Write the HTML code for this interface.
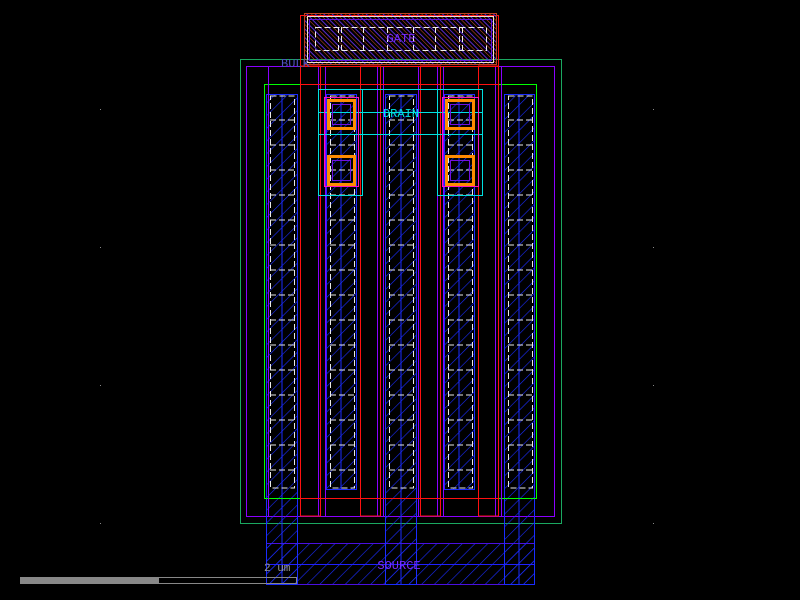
<!DOCTYPE html>
<html><head><style>html,body{margin:0;padding:0;background:#000;}svg{display:block}</style></head>
<body>
<svg width="800" height="600" viewBox="0 0 800 600" xmlns="http://www.w3.org/2000/svg" font-family="Liberation Mono, monospace">
<defs>
<pattern id="hb" width="9" height="9" patternUnits="userSpaceOnUse" patternTransform="rotate(45)">
<line x1="0" y1="0" x2="0" y2="9" stroke="#1a2cff" stroke-width="1.2"/></pattern>
<pattern id="hg" width="6" height="6" patternUnits="userSpaceOnUse" patternTransform="rotate(-45)">
<line x1="0" y1="0" x2="0" y2="6" stroke="#e0502a" stroke-width="1"/>
<line x1="3" y1="0" x2="3" y2="6" stroke="#5a2ad0" stroke-width="1"/></pattern>
</defs>
<rect width="800" height="600" fill="#000"/>
<g fill="#888"><rect x="100" y="109" width="1" height="1"/><rect x="100" y="247" width="1" height="1"/><rect x="100" y="385" width="1" height="1"/><rect x="100" y="523" width="1" height="1"/><rect x="653" y="109" width="1" height="1"/><rect x="653" y="247" width="1" height="1"/><rect x="653" y="385" width="1" height="1"/><rect x="653" y="523" width="1" height="1"/></g>
<g fill="none">
<rect x="240.5" y="59.5" width="321" height="464" stroke="#1aa860"/>
<rect x="246.5" y="66.5" width="308" height="450" stroke="#8a00ff"/>
<!-- source -->
<rect x="266.5" y="543.5" width="268" height="41" fill="url(#hb)" stroke="#4a10e0"/>
<line x1="266" y1="564.5" x2="534" y2="564.5" stroke="#2020ff"/>
<!-- diffusion columns -->
<g stroke="#1a2cff">
<rect x="266.5" y="94.5" width="31" height="490" fill="url(#hb)"/>
<rect x="385.5" y="94.5" width="31" height="490" fill="url(#hb)"/>
<rect x="504.5" y="94.5" width="30" height="490" fill="url(#hb)"/>
<rect x="326.5" y="94.5" width="30" height="395" fill="url(#hb)"/>
<rect x="444.5" y="94.5" width="30" height="395" fill="url(#hb)"/>
<line x1="282" y1="94" x2="282" y2="584"/><line x1="341" y1="94" x2="341" y2="489"/><line x1="401" y1="94" x2="401" y2="584"/><line x1="459" y1="94" x2="459" y2="489"/><line x1="519" y1="94" x2="519" y2="584"/>
</g>
<rect x="264.5" y="84.5" width="272" height="414" stroke="#00ff00"/>
<!-- contacts -->
<g stroke="#e8e8e8" stroke-dasharray="6,3">
<rect x="270.5" y="96" width="24" height="392"/>
<rect x="330.5" y="96" width="24" height="392"/>
<rect x="389.5" y="96" width="24" height="392"/>
<rect x="448.5" y="96" width="24" height="392"/>
<rect x="508.5" y="96" width="24" height="392"/>
</g>
<g stroke="#e8e8e8" stroke-dasharray="6,3" id="hl">
<path d="M270 120H295M270 145H295M270 170H295M270 195H295M270 220H295M270 245H295M270 270H295M270 295H295M270 320H295M270 345H295M270 370H295M270 395H295M270 420H295M270 445H295M270 470H295"/>
<path transform="translate(60,0)" d="M270 120H295M270 145H295M270 170H295M270 195H295M270 220H295M270 245H295M270 270H295M270 295H295M270 320H295M270 345H295M270 370H295M270 395H295M270 420H295M270 445H295M270 470H295"/>
<path transform="translate(119,0)" d="M270 120H295M270 145H295M270 170H295M270 195H295M270 220H295M270 245H295M270 270H295M270 295H295M270 320H295M270 345H295M270 370H295M270 395H295M270 420H295M270 445H295M270 470H295"/>
<path transform="translate(178,0)" d="M270 120H295M270 145H295M270 170H295M270 195H295M270 220H295M270 245H295M270 270H295M270 295H295M270 320H295M270 345H295M270 370H295M270 395H295M270 420H295M270 445H295M270 470H295"/>
<path transform="translate(238,0)" d="M270 120H295M270 145H295M270 170H295M270 195H295M270 220H295M270 245H295M270 270H295M270 295H295M270 320H295M270 345H295M270 370H295M270 395H295M270 420H295M270 445H295M270 470H295"/>
</g>
<!-- purple finger lines -->
<g stroke="#8a00ff">
<line x1="268.5" y1="66" x2="268.5" y2="516"/><line x1="318.5" y1="66" x2="318.5" y2="516"/><line x1="325.5" y1="66" x2="325.5" y2="516"/>
<line x1="377.5" y1="66" x2="377.5" y2="516"/><line x1="383.5" y1="66" x2="383.5" y2="516"/><line x1="418.5" y1="66" x2="418.5" y2="516"/>
<line x1="437.5" y1="66" x2="437.5" y2="516"/><line x1="443.5" y1="66" x2="443.5" y2="516"/><line x1="495.5" y1="66" x2="495.5" y2="516"/><line x1="501.5" y1="66" x2="501.5" y2="516"/>
</g>
<!-- red gates -->
<g stroke="#ff1010">
<rect x="300.5" y="15.5" width="198" height="51"/>
<rect x="300.5" y="66" width="20" height="450"/>
<rect x="360.5" y="66" width="20" height="450"/>
<rect x="420.5" y="66" width="20" height="450"/>
<rect x="478.5" y="66" width="20" height="450"/>
<line x1="300" y1="84.5" x2="498" y2="84.5"/>
<line x1="300" y1="498.5" x2="498" y2="498.5"/>
</g>
<!-- gate pad -->
<rect x="304.5" y="13.5" width="192" height="51" fill="url(#hg)" stroke="#c04020"/>
<rect x="307.5" y="16.5" width="186" height="46" stroke="#f0e0d0"/>
<rect x="309.5" y="19.5" width="182" height="41" stroke="#6010e0"/>
<g stroke="#eee" stroke-dasharray="6,3">
<rect x="315.5" y="27.5" width="171" height="23"/>
<path d="M338.5 27V50M341.5 27V50M363.5 27V50M387.5 27V50M413.5 27V50M435.5 27V50M459.5 27V50M462.5 27V50"/>
</g>
<!-- cyan drain -->
<g stroke="#00e0e0">
<rect x="318.5" y="89.5" width="44" height="106"/>
<rect x="437.5" y="89.5" width="45" height="106"/>
<line x1="318" y1="89.5" x2="482" y2="89.5"/>
<line x1="318" y1="112.5" x2="482" y2="112.5"/>
<line x1="318" y1="134.5" x2="482" y2="134.5"/>
</g>
<g stroke="#ff10c0"><rect x="324.5" y="97.5" width="34" height="89"/><rect x="442.5" y="97.5" width="36" height="89"/></g>
<g stroke="#ff8c00" stroke-width="3">
<rect x="328.5" y="100.5" width="26" height="28"/><rect x="328.5" y="156.5" width="26" height="28"/>
<rect x="446.5" y="100.5" width="27" height="28"/><rect x="446.5" y="156.5" width="27" height="28"/>
</g>
<g stroke="#7010e0"><rect x="332.5" y="104.5" width="18" height="20"/><rect x="332.5" y="160.5" width="18" height="20"/><rect x="450.5" y="104.5" width="19" height="20"/><rect x="450.5" y="160.5" width="19" height="20"/></g>
</g>
<!-- scale bar -->
<rect x="20.5" y="577.5" width="276" height="6" fill="none" stroke="#888"/>
<rect x="20" y="577" width="139" height="7" fill="#888"/>
<g font-size="12">
<text x="401" y="42" fill="#7a2aff" text-anchor="middle">GATE</text>
<text x="281" y="67" fill="#5050c0">BULK</text>
<text x="401" y="117" fill="#00e0e0" text-anchor="middle">DRAIN</text>
<text x="399" y="569" fill="#7a2aff" text-anchor="middle">SOURCE</text>
<text x="264" y="571" fill="#999" font-size="11">2 um</text>
</g>
</svg>
</body></html>
